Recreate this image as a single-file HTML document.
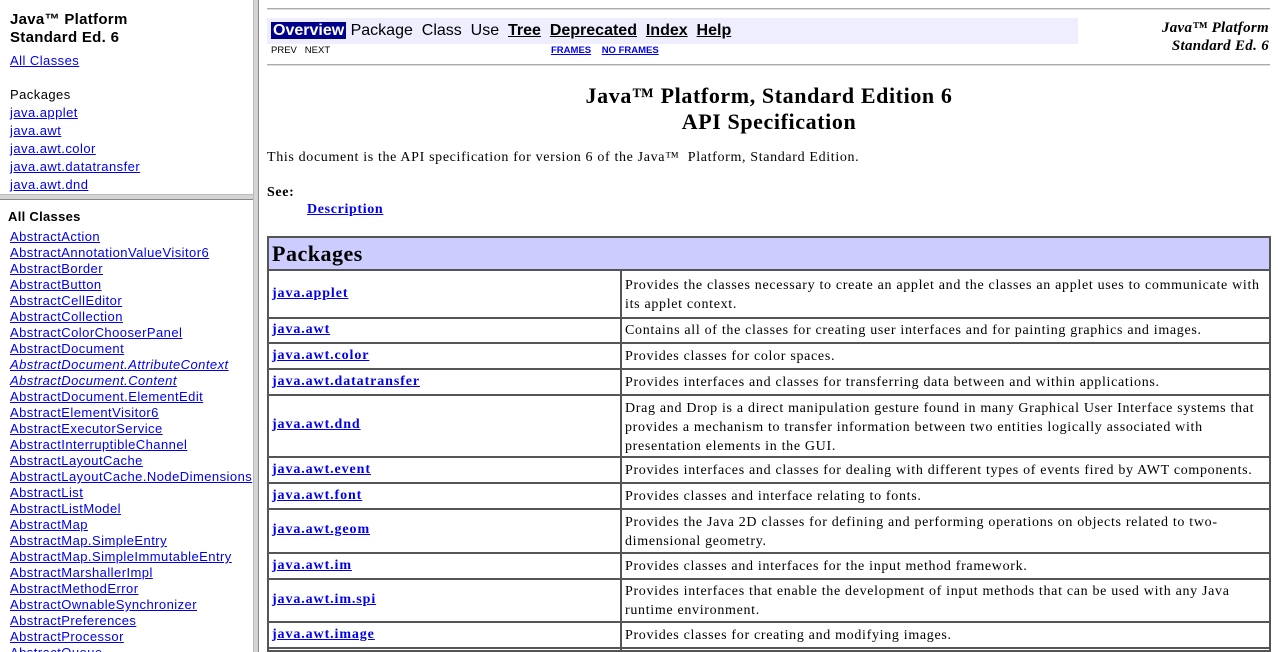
<!DOCTYPE html>
<html style="overflow:hidden;width:1278px;height:652px"><head><meta charset="utf-8"><style>
*{margin:0;padding:0;box-sizing:border-box}
body{width:1278px;height:652px;overflow:hidden;background:#fff;position:relative;font-family:"Liberation Sans",sans-serif}
a{color:#00e;text-decoration:underline}
.abs{position:absolute;white-space:nowrap}
.lf{font-size:13px;line-height:16px;letter-spacing:0.45px}
#tl{position:absolute;left:0;top:0;width:253px;height:195px;overflow:hidden}
#bl{position:absolute;left:0;top:199px;width:253px;height:453px;overflow:hidden}
#vbar{position:absolute;left:253px;top:0;width:6px;height:652px;background:#d4d4d4;border-left:1px solid #bbb;border-right:1px solid #888}
#hbar{position:absolute;left:0;top:194px;width:254px;height:6px;background:#d4d4d4;border-top:1px solid #bbb;border-bottom:1px solid #888}
.serif{font-family:"Liberation Serif",serif;letter-spacing:0.65px}
.hr{position:absolute;left:267px;width:1003px;height:2px;background:#aaa;border-bottom:1px solid #ddd}
.row{position:absolute;left:267px;width:1004px;border:2px solid #555;border-top:none}
.c1{position:absolute;left:0;top:0;bottom:0;width:353px;border-right:2px solid #555}
.c1 a{position:absolute;left:3px;font-weight:bold;font-size:14px;font-family:"Liberation Serif",serif;letter-spacing:0.9px;white-space:nowrap}
.c2{position:absolute;left:356px;right:4px;font-size:14px;line-height:19px;font-family:"Liberation Serif",serif;letter-spacing:0.68px}
</style></head><body>
<div id="tl">
<div class="abs" style="left:10px;top:11px;font-size:15px;font-weight:bold;line-height:18px;letter-spacing:0.3px">Java™ Platform<br>Standard Ed. 6</div>
<div class="abs lf" style="left:10px;top:53px"><a href="#">All Classes</a></div>
<div class="abs lf" style="left:10px;top:86px;line-height:18px">Packages<br><a href="#">java.applet</a><br><a href="#">java.awt</a><br><a href="#">java.awt.color</a><br><a href="#">java.awt.datatransfer</a><br><a href="#">java.awt.dnd</a></div>
</div>
<div id="bl">
<div class="abs" style="left:8px;top:10px;font-size:13px;font-weight:bold;letter-spacing:0.3px">All Classes</div>
<div class="abs lf" style="left:10px;top:30px">
<a href="#">AbstractAction</a><br><a href="#">AbstractAnnotationValueVisitor6</a><br><a href="#">AbstractBorder</a><br><a href="#">AbstractButton</a><br><a href="#">AbstractCellEditor</a><br><a href="#">AbstractCollection</a><br><a href="#">AbstractColorChooserPanel</a><br><a href="#">AbstractDocument</a><br><a href="#"><i>AbstractDocument.AttributeContext</i></a><br><a href="#"><i>AbstractDocument.Content</i></a><br><a href="#">AbstractDocument.ElementEdit</a><br><a href="#">AbstractElementVisitor6</a><br><a href="#">AbstractExecutorService</a><br><a href="#">AbstractInterruptibleChannel</a><br><a href="#">AbstractLayoutCache</a><br><a href="#">AbstractLayoutCache.NodeDimensions</a><br><a href="#">AbstractList</a><br><a href="#">AbstractListModel</a><br><a href="#">AbstractMap</a><br><a href="#">AbstractMap.SimpleEntry</a><br><a href="#">AbstractMap.SimpleImmutableEntry</a><br><a href="#">AbstractMarshallerImpl</a><br><a href="#">AbstractMethodError</a><br><a href="#">AbstractOwnableSynchronizer</a><br><a href="#">AbstractPreferences</a><br><a href="#">AbstractProcessor</a><br><a href="#">AbstractQueue</a>
</div></div>
<div id="hbar"></div><div id="vbar"></div>

<div class="hr" style="top:8px"></div>
<div class="abs" style="left:267px;top:18px;width:811px;height:26px;background:#eeeeff"></div>
<div class="abs" style="left:271px;top:21px;font-size:16px;line-height:20px">
<span style="background:#00008b;color:#fff;font-weight:bold;padding:0 2px">Overview</span> Package&nbsp; Class&nbsp; Use&nbsp; <b><u>Tree</u></b>&nbsp; <b><u>Deprecated</u></b>&nbsp; <b><u>Index</u></b>&nbsp; <b><u>Help</u></b></div>
<div class="abs" style="left:271px;top:45px;font-size:9.5px">PREV&nbsp;&nbsp; NEXT</div>
<div class="abs" style="left:551px;top:45px;font-size:9.5px;font-weight:bold"><a href="#">FRAMES</a>&nbsp;&nbsp;&nbsp; <a href="#">NO FRAMES</a></div>
<div class="abs serif" style="right:9px;top:19px;font-size:15px;font-weight:bold;font-style:italic;text-align:right;line-height:18px;letter-spacing:0.3px">Java™ Platform<br>Standard Ed. 6</div>
<div class="hr" style="top:64px"></div>

<div class="abs serif" style="left:267px;width:1004px;top:83px;text-align:center;font-size:22px;font-weight:bold;line-height:26px;letter-spacing:0.6px">Java™ Platform, Standard Edition 6<br>API Specification</div>
<div class="abs serif" style="left:267px;top:150px;font-size:14px">This document is the API specification for version 6 of the Java™&nbsp; Platform, Standard Edition.</div>
<div class="abs serif" style="left:267px;top:185px;font-size:14px;font-weight:bold">See:</div>
<div class="abs serif" style="left:307px;top:202px;font-size:14px;font-weight:bold"><a href="#">Description</a></div>

<div class="abs" style="left:267px;top:236px;width:1004px;height:35px;background:#ccccff;border:2px solid #555"></div>
<div class="abs serif" style="left:272px;top:241px;font-size:22px;font-weight:bold;letter-spacing:0.5px">Packages</div>

<div class="row" style="top:271px;height:48px"><div class="c1"><a href="#" style="top:15px">java.applet</a></div><div class="c2" style="top:5px">Provides the classes necessary to create an applet and the classes an applet uses to communicate with its applet context.</div></div>
<div class="row" style="top:319px;height:25px"><div class="c1"><a href="#" style="top:3px">java.awt</a></div><div class="c2" style="top:2px">Contains all of the classes for creating user interfaces and for painting graphics and images.</div></div>
<div class="row" style="top:344px;height:26px"><div class="c1"><a href="#" style="top:4px">java.awt.color</a></div><div class="c2" style="top:3px">Provides classes for color spaces.</div></div>
<div class="row" style="top:370px;height:26px"><div class="c1"><a href="#" style="top:4px">java.awt.datatransfer</a></div><div class="c2" style="top:3px">Provides interfaces and classes for transferring data between and within applications.</div></div>
<div class="row" style="top:396px;height:62px"><div class="c1"><a href="#" style="top:21px">java.awt.dnd</a></div><div class="c2" style="top:3px">Drag and Drop is a direct manipulation gesture found in many Graphical User Interface systems that provides a mechanism to transfer information between two entities logically associated with presentation elements in the GUI.</div></div>
<div class="row" style="top:458px;height:26px"><div class="c1"><a href="#" style="top:4px">java.awt.event</a></div><div class="c2" style="top:3px">Provides interfaces and classes for dealing with different types of events fired by AWT components.</div></div>
<div class="row" style="top:484px;height:26px"><div class="c1"><a href="#" style="top:4px">java.awt.font</a></div><div class="c2" style="top:3px">Provides classes and interface relating to fonts.</div></div>
<div class="row" style="top:510px;height:44px"><div class="c1"><a href="#" style="top:12px">java.awt.geom</a></div><div class="c2" style="top:3px">Provides the Java 2D classes for defining and performing operations on objects related to two-dimensional geometry.</div></div>
<div class="row" style="top:554px;height:26px"><div class="c1"><a href="#" style="top:4px">java.awt.im</a></div><div class="c2" style="top:3px">Provides classes and interfaces for the input method framework.</div></div>
<div class="row" style="top:580px;height:43px"><div class="c1"><a href="#" style="top:12px">java.awt.im.spi</a></div><div class="c2" style="top:2px">Provides interfaces that enable the development of input methods that can be used with any Java runtime environment.</div></div>
<div class="row" style="top:623px;height:26px"><div class="c1"><a href="#" style="top:4px">java.awt.image</a></div><div class="c2" style="top:3px">Provides classes for creating and modifying images.</div></div>
<div class="row" style="top:649px;height:3px"><div class="c1"></div></div>
</body></html>
